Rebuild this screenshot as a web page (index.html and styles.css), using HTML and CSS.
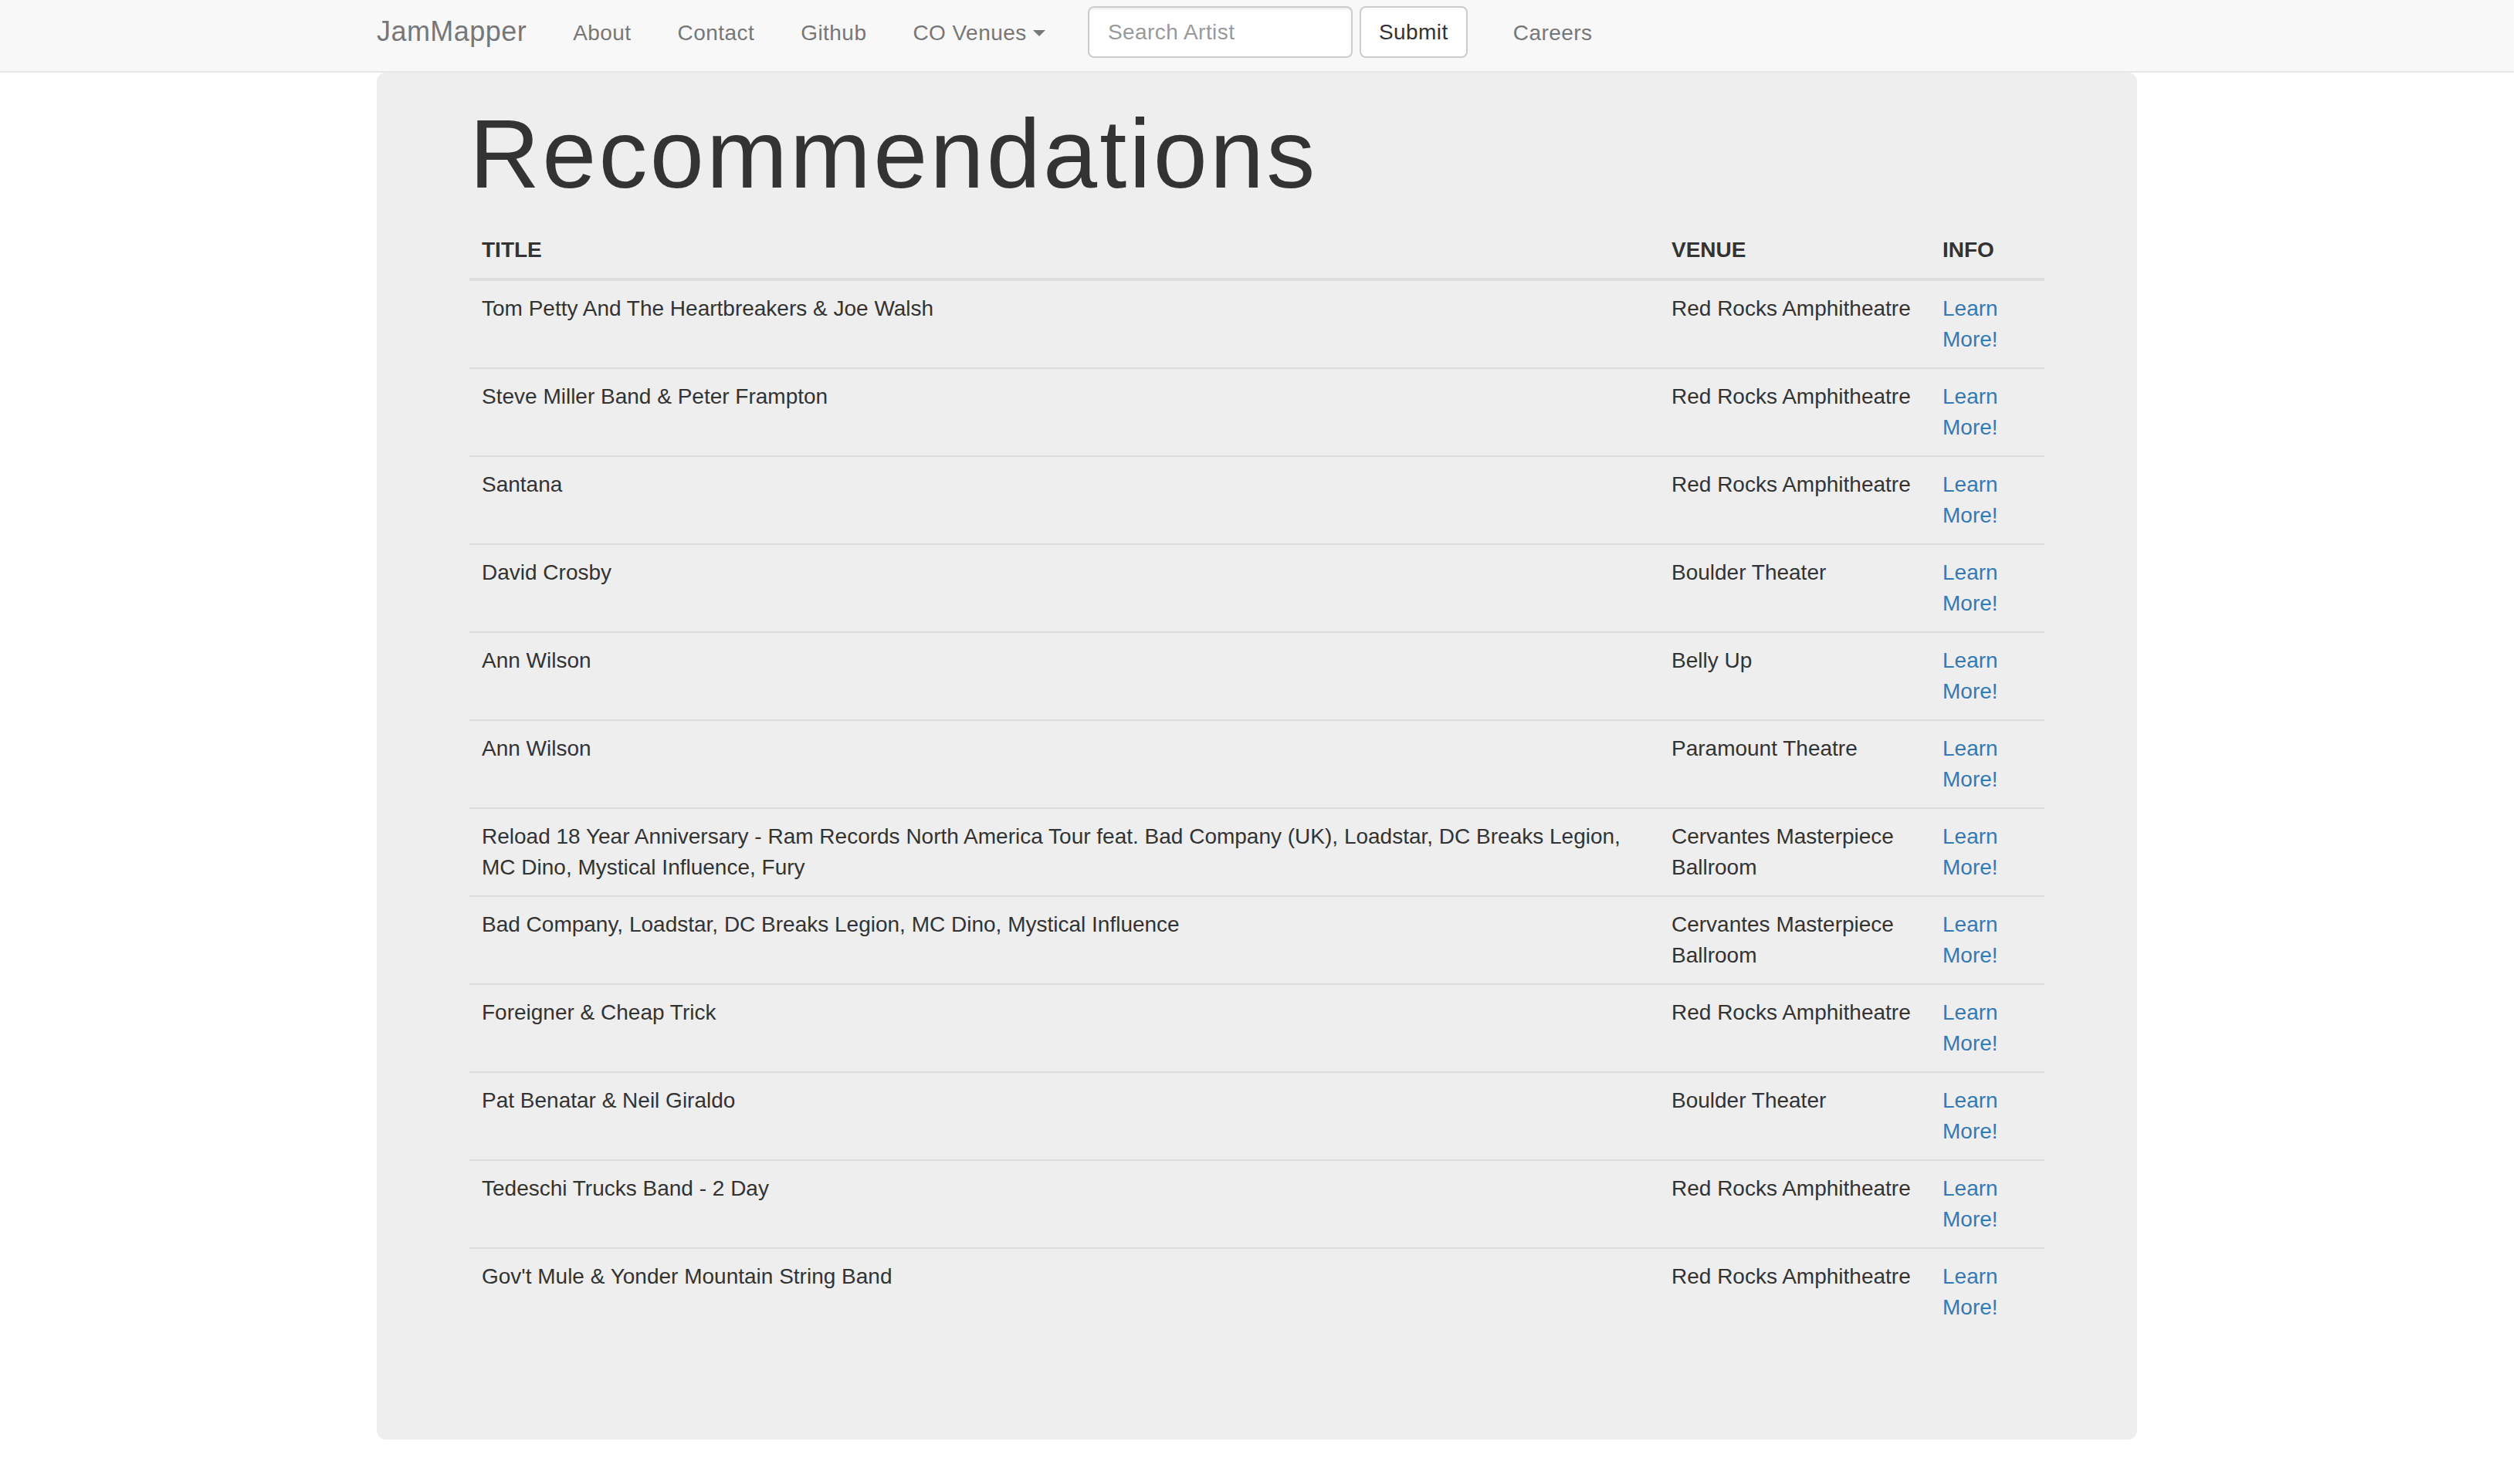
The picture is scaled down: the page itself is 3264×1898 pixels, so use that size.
FILE: index.html
```html
<!DOCTYPE html>
<html lang="en">
<head>
<meta charset="utf-8">
<title>JamMapper - Recommendations</title>
<link rel="stylesheet" href="styles.css">
</head>
<body>
<nav class="navbar">
  <div class="container nav-inner">
    <a class="brand" href="#">JamMapper</a>
    <ul class="nav">
      <li><a href="#">About</a></li>
      <li><a href="#">Contact</a></li>
      <li><a href="#">Github</a></li>
      <li><a href="#">CO Venues <span class="caret"></span></a></li>
    </ul>
    <form class="nav-form">
      <input class="search" type="text" placeholder="Search Artist">
      <button class="btn" type="button">Submit</button>
    </form>
    <ul class="nav">
      <li><a href="#">Careers</a></li>
    </ul>
  </div>
</nav>
<main class="container">
  <div class="jumbotron">
    <h1 class="title">Recommendations</h1>
    <table class="table">
      <colgroup>
        <col class="col-title">
        <col class="col-venue">
        <col class="col-info">
      </colgroup>
      <thead>
        <tr><th>TITLE</th><th>VENUE</th><th>INFO</th></tr>
      </thead>
      <tbody>
        <tr><td>Tom Petty And The Heartbreakers &amp; Joe Walsh</td><td>Red Rocks Amphitheatre</td><td><a href="#">Learn More!</a></td></tr>
        <tr><td>Steve Miller Band &amp; Peter Frampton</td><td>Red Rocks Amphitheatre</td><td><a href="#">Learn More!</a></td></tr>
        <tr><td>Santana</td><td>Red Rocks Amphitheatre</td><td><a href="#">Learn More!</a></td></tr>
        <tr><td>David Crosby</td><td>Boulder Theater</td><td><a href="#">Learn More!</a></td></tr>
        <tr><td>Ann Wilson</td><td>Belly Up</td><td><a href="#">Learn More!</a></td></tr>
        <tr><td>Ann Wilson</td><td>Paramount Theatre</td><td><a href="#">Learn More!</a></td></tr>
        <tr><td>Reload 18 Year Anniversary - Ram Records North America Tour feat. Bad Company (UK), Loadstar, DC Breaks Legion, MC Dino, Mystical Influence, Fury</td><td>Cervantes Masterpiece Ballroom</td><td><a href="#">Learn More!</a></td></tr>
        <tr><td>Bad Company, Loadstar, DC Breaks Legion, MC Dino, Mystical Influence</td><td>Cervantes Masterpiece Ballroom</td><td><a href="#">Learn More!</a></td></tr>
        <tr><td>Foreigner &amp; Cheap Trick</td><td>Red Rocks Amphitheatre</td><td><a href="#">Learn More!</a></td></tr>
        <tr><td>Pat Benatar &amp; Neil Giraldo</td><td>Boulder Theater</td><td><a href="#">Learn More!</a></td></tr>
        <tr><td>Tedeschi Trucks Band - 2 Day</td><td>Red Rocks Amphitheatre</td><td><a href="#">Learn More!</a></td></tr>
        <tr><td>Gov't Mule &amp; Yonder Mountain String Band</td><td>Red Rocks Amphitheatre</td><td><a href="#">Learn More!</a></td></tr>
      </tbody>
    </table>
  </div>
</main>
</body>
</html>
```
FILE: styles.css
```css
* { box-sizing: border-box; }

html, body {
  margin: 0;
  background: #fff;
}

body {
  padding-right: 8px;
  font-family: "Liberation Sans", Arial, Helvetica, sans-serif;
  font-size: 28px;
  line-height: 40px;
  color: #333;
}

a { text-decoration: none; }

.container {
  width: 2340px;
  margin: 0 auto;
  padding: 0 30px;
}

/* ---------- navbar ---------- */
.navbar {
  background: #f8f8f8;
  border-bottom: 2px solid #e7e7e7;
  height: 94px;
}

.nav-inner {
  display: flex;
  align-items: flex-start;
  height: 92px;
}

.brand {
  display: block;
  padding: 21px 30px 0 0;
  font-size: 36px;
  line-height: 40px;
  letter-spacing: 0.45px;
  color: #777;
}

.nav {
  display: flex;
  margin: 0;
  padding: 0;
  list-style: none;
}

.nav a {
  display: block;
  padding: 23px 30px 0;
  line-height: 40px;
  letter-spacing: 0.45px;
  color: #777;
}

.caret {
  display: inline-block;
  width: 0;
  height: 0;
  margin-left: 0;
  vertical-align: middle;
  border-top: 8px solid #777;
  border-left: 8px solid transparent;
  border-right: 8px solid transparent;
  position: relative;
  top: -2px;
}

.nav-form {
  display: flex;
  gap: 9px;
  margin: 0;
  padding: 8px 29px 0 25px;
}

.search {
  width: 343px;
  height: 67px;
  padding: 0 24px;
  border: 2px solid #ccc;
  border-radius: 8px;
  background: #fff;
  box-shadow: inset 0 2px 2px rgba(0, 0, 0, .075);
  font-family: inherit;
  font-size: 28px;
  letter-spacing: 0.45px;
  color: #555;
  outline: none;
}

.search::placeholder { color: #999; }

.btn {
  height: 67px;
  padding: 0 23px;
  border: 2px solid #ccc;
  border-radius: 8px;
  background: #fff;
  font-family: inherit;
  font-size: 28px;
  letter-spacing: 0.45px;
  color: #333;
}

/* ---------- jumbotron ---------- */
.jumbotron {
  background: #eee;
  border-radius: 12px;
  padding: 37px 120px 135px;
}

.title {
  margin: 0 0 18px;
  font-size: 126px;
  line-height: 1.1;
  font-weight: 500;
  color: #333;
  letter-spacing: 3.2px;
}

/* ---------- table ---------- */
.table {
  width: 100%;
  table-layout: fixed;
  border-collapse: separate;
  border-spacing: 0;
}

.col-title { width: 1541px; }
.col-venue { width: 351px; }
.col-info { width: 148px; }

.table th {
  padding: 16px;
  text-align: left;
  font-weight: bold;
  line-height: 40px;
  border-bottom: 4px solid #ddd;
}

.table td {
  padding: 16px;
  vertical-align: top;
  line-height: 40px;
  border-top: 2px solid #ddd;
}

.table tbody tr:first-child td { border-top: 0; }

.table td a { color: #337ab7; }
```
